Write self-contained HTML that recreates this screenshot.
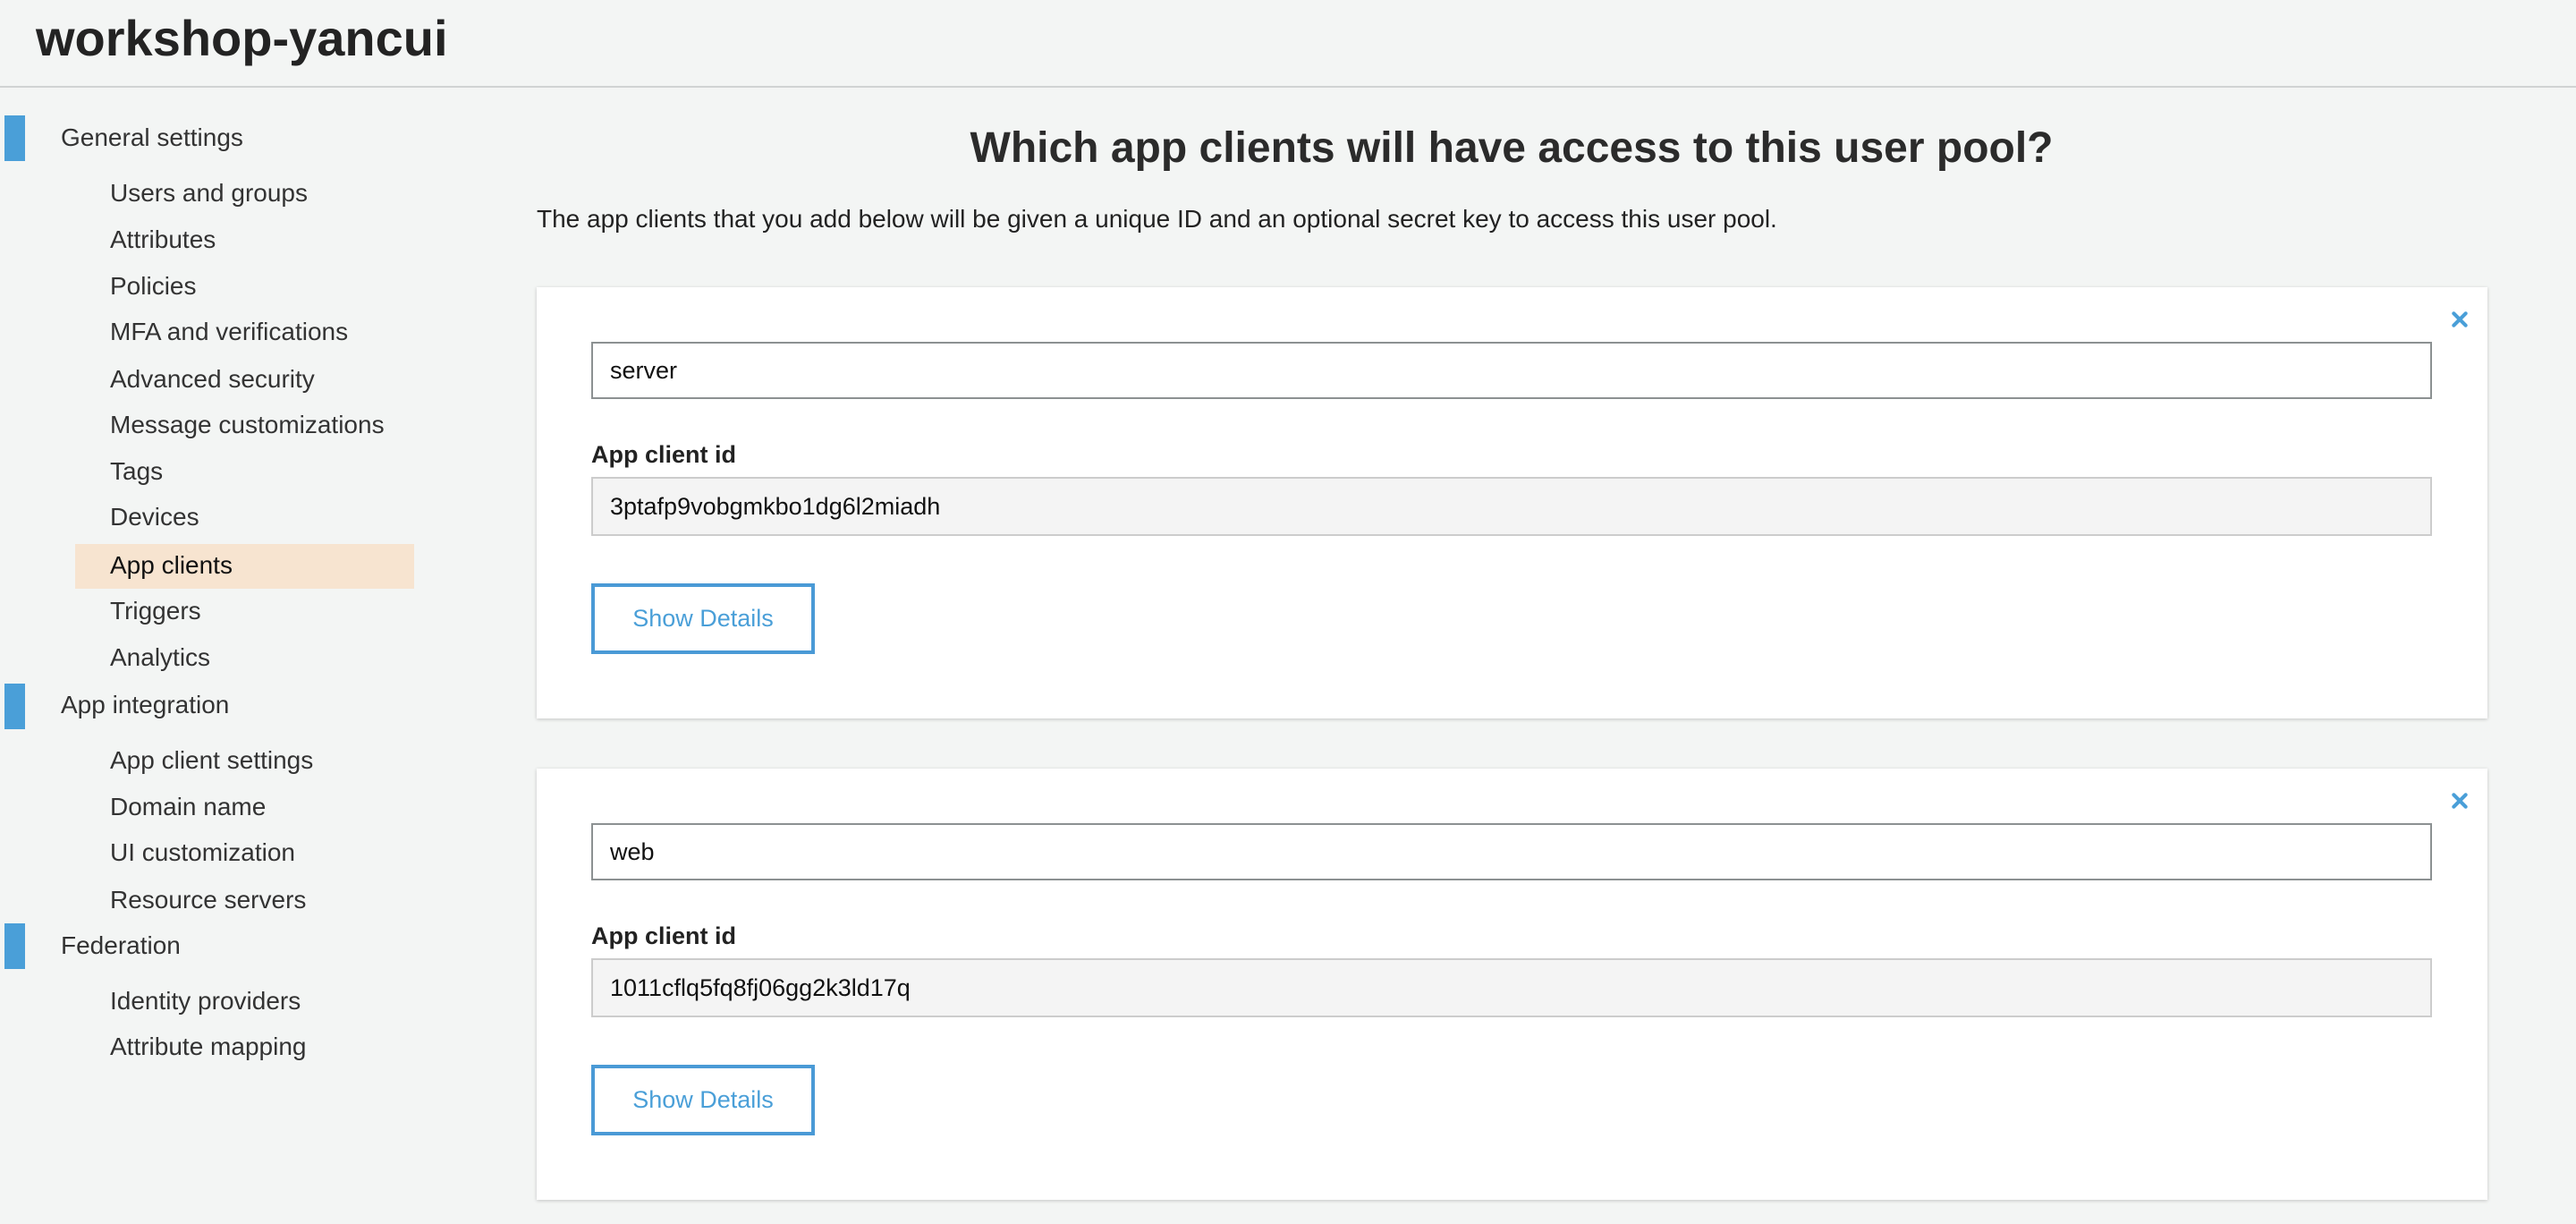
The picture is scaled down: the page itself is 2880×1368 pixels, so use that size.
<!DOCTYPE html>
<html><head><meta charset="utf-8"><style>
*{margin:0;padding:0;box-sizing:border-box}
body{width:2880px;height:1368px;background:#f3f5f4;font-family:"Liberation Sans",Arial,sans-serif;color:#333;position:relative;overflow:hidden}
.abs{position:absolute;white-space:nowrap}
.title{left:40px;top:8px;font-size:56px;font-weight:bold;color:#232323;line-height:70px}
.hline{left:0;top:96px;width:2880px;height:2px;background:#d0d3d3}
.bar{left:5px;width:23px;height:51px;background:#4a9fd8}
.hd{left:68px;font-size:28px;line-height:34px;color:#333}
.it{left:123px;font-size:28px;line-height:34px;color:#333}
.hl{left:84px;top:608px;width:379px;height:50px;background:#f7e4d0}
.h1{left:0;width:3380px;text-align:center;top:134px;font-size:48px;font-weight:bold;color:#2b2b2b;line-height:64px}
.desc{left:600px;top:228px;font-size:28px;color:#222;line-height:34px}
.card{left:600px;width:2181px;height:482px;background:#fff;box-shadow:0 1px 4px rgba(0,0,0,.2)}
.inp{position:absolute;left:61px;top:61px;width:2058px;height:64px;border:2px solid #8c9192;font-size:27px;line-height:60px;padding-left:19px;color:#111}
.lbl{position:absolute;left:61px;top:170px;font-size:27px;font-weight:bold;color:#222;line-height:34px}
.idb{position:absolute;left:61px;top:212px;width:2058px;height:66px;border:2px solid #ccc;background:#f4f4f4;font-size:27px;line-height:62px;padding-left:19px;color:#111}
.btn{position:absolute;left:61px;top:331px;width:250px;height:79px;border:4px solid #4a9ad6;color:#4a9fd8;font-size:27px;line-height:71px;text-align:center}
.x{position:absolute;left:2140px;top:26px;width:20px;height:20px}
</style></head><body>
<div class="abs title">workshop-yancui</div>
<div class="abs hline"></div>
<div class="abs hl"></div>
<div class="abs bar" style="top:129px"></div>
<div class="abs bar" style="top:764px"></div>
<div class="abs bar" style="top:1032px"></div>
<div class="abs hd" style="top:137px">General settings</div>
<div class="abs it" style="top:199px">Users and groups</div>
<div class="abs it" style="top:251px">Attributes</div>
<div class="abs it" style="top:303px">Policies</div>
<div class="abs it" style="top:354px">MFA and verifications</div>
<div class="abs it" style="top:407px">Advanced security</div>
<div class="abs it" style="top:458px">Message customizations</div>
<div class="abs it" style="top:510px">Tags</div>
<div class="abs it" style="top:561px">Devices</div>
<div class="abs it" style="top:615px;color:#111">App clients</div>
<div class="abs it" style="top:666px">Triggers</div>
<div class="abs it" style="top:718px">Analytics</div>
<div class="abs hd" style="top:771px">App integration</div>
<div class="abs it" style="top:833px">App client settings</div>
<div class="abs it" style="top:885px">Domain name</div>
<div class="abs it" style="top:936px">UI customization</div>
<div class="abs it" style="top:989px">Resource servers</div>
<div class="abs hd" style="top:1040px">Federation</div>
<div class="abs it" style="top:1102px">Identity providers</div>
<div class="abs it" style="top:1153px">Attribute mapping</div>
<div class="abs h1">Which app clients will have access to this user pool?</div>
<div class="abs desc">The app clients that you add below will be given a unique ID and an optional secret key to access this user pool.</div>
<div class="abs card" style="top:321px">
<svg class="x" viewBox="0 0 24 24"><path d="M4 4L20 20M20 4L4 20" stroke="#4a9fd8" stroke-width="5" stroke-linecap="round"/></svg>
<div class="inp">server</div>
<div class="lbl">App client id</div>
<div class="idb">3ptafp9vobgmkbo1dg6l2miadh</div>
<div class="btn">Show Details</div>
</div>
<div class="abs card" style="top:859px">
<svg class="x" viewBox="0 0 24 24"><path d="M4 4L20 20M20 4L4 20" stroke="#4a9fd8" stroke-width="5" stroke-linecap="round"/></svg>
<div class="inp">web</div>
<div class="lbl">App client id</div>
<div class="idb">1011cflq5fq8fj06gg2k3ld17q</div>
<div class="btn">Show Details</div>
</div>
</body></html>
